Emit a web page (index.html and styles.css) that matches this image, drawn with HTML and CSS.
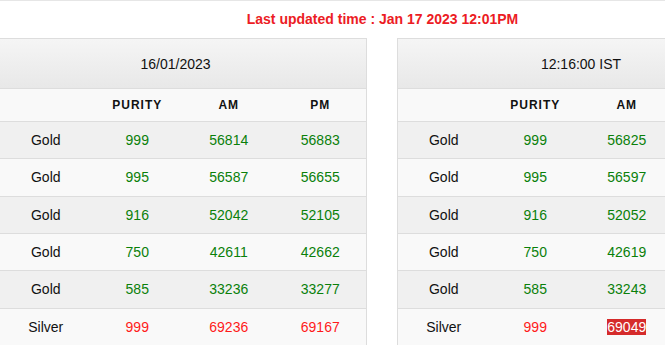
FILE: index.html
```html
<!DOCTYPE html>
<html>
<head>
<meta charset="utf-8">
<link rel="stylesheet" href="styles.css">
</head>
<body>
<div class="page">
  <div class="title">Last updated time : Jan 17 2023 12:01PM</div>
  <div class="panels">
    <div class="panel">
      <div class="panel-heading panel-heading--date">16/01/2023</div>
      <table class="rates">
        <thead>
          <tr><th></th><th>PURITY</th><th>AM</th><th>PM</th></tr>
        </thead>
        <tbody>
          <tr><td>Gold</td><td class="up">999</td><td class="up">56814</td><td class="up">56883</td></tr>
          <tr><td>Gold</td><td class="up">995</td><td class="up">56587</td><td class="up">56655</td></tr>
          <tr><td>Gold</td><td class="up">916</td><td class="up">52042</td><td class="up">52105</td></tr>
          <tr><td>Gold</td><td class="up">750</td><td class="up">42611</td><td class="up">42662</td></tr>
          <tr><td>Gold</td><td class="up">585</td><td class="up">33236</td><td class="up">33277</td></tr>
          <tr><td>Silver</td><td class="down">999</td><td class="down">69236</td><td class="down">69167</td></tr>
        </tbody>
      </table>
    </div>
    <div class="panel">
      <div class="panel-heading">12:16:00 IST</div>
      <table class="rates">
        <thead>
          <tr><th></th><th>PURITY</th><th>AM</th><th>PM</th></tr>
        </thead>
        <tbody>
          <tr><td>Gold</td><td class="up">999</td><td class="up">56825</td><td class="up"></td></tr>
          <tr><td>Gold</td><td class="up">995</td><td class="up">56597</td><td class="up"></td></tr>
          <tr><td>Gold</td><td class="up">916</td><td class="up">52052</td><td class="up"></td></tr>
          <tr><td>Gold</td><td class="up">750</td><td class="up">42619</td><td class="up"></td></tr>
          <tr><td>Gold</td><td class="up">585</td><td class="up">33243</td><td class="up"></td></tr>
          <tr><td>Silver</td><td class="down">999</td><td class="down"><span class="flash">69049</span></td><td class="down"></td></tr>
        </tbody>
      </table>
    </div>
  </div>
</div>
</body>
</html>
```

FILE: styles.css
```css
html, body {
  margin: 0;
  padding: 0;
  background: #fff;
  overflow: hidden;
}
body {
  font-family: "Liberation Sans", Arial, sans-serif;
  font-size: 14px;
  line-height: 20px;
  color: #111;
}
.page {
  border-top: 1px solid #e6e6e6;
  width: 767px;
  margin-left: -1px;
}
.title {
  padding-top: 8px;
  margin-bottom: 9px;
  text-align: center;
  font-weight: bold;
  color: #ec1c24;
  line-height: 20px;
}
.panels {
  display: flex;
  gap: 30px;
}
.panel {
  width: 368px;
  flex: none;
  box-sizing: border-box;
  border: 1px solid #dddddd;
}
.panel-heading {
  height: 49px;
  line-height: 50px;
  text-align: center;
  background: linear-gradient(to bottom, #f5f5f5 0%, #e8e8e8 100%);
  color: #111;
}
.panel-heading--date {
  padding-right: 15px;
}
.rates {
  width: 100%;
  border-collapse: collapse;
  table-layout: fixed;
}
.rates th,
.rates td {
  text-align: center;
  border-top: 1px solid #dddddd;
  padding: 8px 0;
}
.rates td {
  height: 20.33px;
  line-height: 20.33px;
}
.rates th {
  font-size: 12px;
  line-height: 16px;
  font-weight: bold;
  letter-spacing: 1px;
  color: #111;
  background: #f9f9f9;
}
.rates tbody tr:nth-child(odd) td {
  background: #f0f0f0;
}
.rates tbody tr:nth-child(even) td {
  background: #f9f9f9;
}
.up {
  color: #0a800a;
}
.down {
  color: #ff1a1a;
}
.flash {
  background: #d52b2b;
  color: #fff;
}
```
